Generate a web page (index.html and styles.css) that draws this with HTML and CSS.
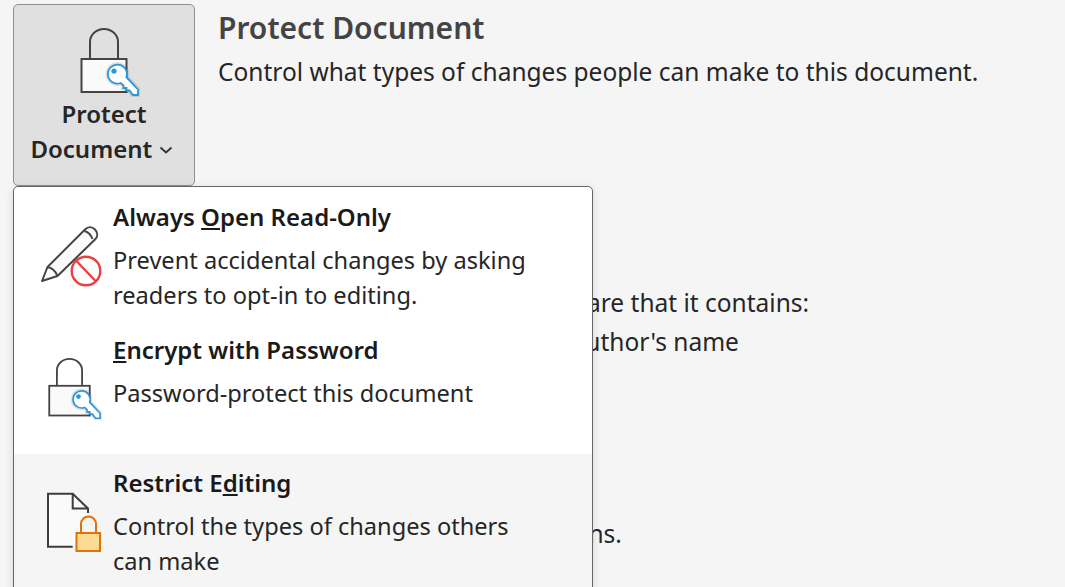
FILE: index.html
```html
<!DOCTYPE html>
<html lang="en">
<head>
    <meta charset="UTF-8">
    <title>Protect Document</title>
    <link rel="stylesheet" href="styles.css">
</head>
<body>
    <svg class="defs" width="0" height="0">
        <symbol id="lock-key" viewBox="78 26 62 70">
            <path d="M90 58V41a14 13 0 0 1 28 0V58" fill="none" stroke="#444" stroke-width="2"/>
            <rect x="81.5" y="58" width="45" height="33" fill="#fafafa" stroke="#444" stroke-width="2"/>
            <path d="M126.4 76.2A9.5 9.5 0 1 0 120.7 82L123.5 84.5V87H126.5V89.5H129.5L133 94H138V88.5Z" fill="none" stroke="currentColor" stroke-opacity="0.12" stroke-width="5"/>
            <path d="M126.4 76.2A9.5 9.5 0 1 0 120.7 82L123.5 84.5V87H126.5V89.5H129.5L133 94H138V88.5Z" fill="#fff" stroke="#2a96d8" stroke-width="1.8"/>
            <circle cx="114" cy="70" r="2.6" fill="#2a96d8"/>
        </symbol>
    </svg>

    <div class="page">
        <button class="protect-btn">
            <svg class="protect-icon"><use href="#lock-key"/></svg>
            <span class="protect-label">Protect</span>
            <span class="protect-label">Document
                <svg class="chevron" viewBox="0 0 14 8"><path d="M1.5 1.5L7 6.5L12.5 1.5" fill="none" stroke="#333" stroke-width="1.8"/></svg>
            </span>
        </button>
        <div class="content">
            <h2>Protect Document</h2>
            <p class="lead">Control what types of changes people can make to this document.</p>
            <p class="inspect">Before publishing this file, be aware that it contains:</p>
            <p class="inspect-item">Document properties and author's name</p>
            <p class="versions">There are no previous versions.</p>
        </div>
    </div>

    <div class="menu">
        <div class="menu-item">
            <svg class="menu-icon" viewBox="40 200 70 100">
                <path d="M42 281L47.500 267L85 229.500C88 226.500 92 226.500 95 229.500C98 232.500 98 236.500 95 239.500L57.500 276Z" fill="#fafafa" stroke="#444" stroke-width="2" stroke-linejoin="round"/>
                <path d="M47.500 267C52 268 56 272 57.500 276M84.500 231C88 232 91 235 92.500 239" fill="none" stroke="#444" stroke-width="2"/>
                <circle cx="86" cy="271" r="14.300" fill="#fff" stroke="#EA3F43" stroke-width="2.400"/>
                <path d="M76.500 261L95.500 281" stroke="#EA3F43" stroke-width="2.400"/>
            </svg>
            <div class="menu-text">
                <div class="menu-title">Always <u>O</u>pen Read-Only</div>
                <div class="menu-desc">Prevent accidental changes by asking<br>readers to opt-in to editing.</div>
            </div>
        </div>
        <div class="menu-item">
            <svg class="menu-lock"><use href="#lock-key"/></svg>
            <div class="menu-text">
                <div class="menu-title"><u>E</u>ncrypt with Password</div>
                <div class="menu-desc">Password-protect this document</div>
            </div>
        </div>
        <div class="menu-item hovered">
            <svg class="menu-icon" viewBox="40 466 70 100">
                <path d="M72.700 546.700H48V493.700H72.700L88 508.500V513" fill="#fafafa" stroke="#3d3d3d" stroke-width="2"/>
                <path d="M72.700 493V508.500H88" fill="none" stroke="#3d3d3d" stroke-width="2"/>
                <path d="M81 533V524a7.500 7.500 0 0 1 15 0V533" fill="none" stroke="#e37109" stroke-width="2"/>
                <rect x="76.500" y="533" width="23.500" height="18" fill="#fbdc92" stroke="#e37109" stroke-width="2"/>
            </svg>
            <div class="menu-text">
                <div class="menu-title">Restrict E<u>d</u>iting</div>
                <div class="menu-desc">Control the types of changes others<br>can make</div>
            </div>
        </div>
    </div>
</body>
</html>
```

FILE: styles.css
```css
html, body {
    margin: 0;
    height: 100%;
    overflow: hidden;
}
body {
    background-color: #F5F5F5;
    font-family: "Noto Sans", "Open Sans", sans-serif;
    color: #262626;
    font-size: 24.5px;
    position: relative;
}
.defs {
    position: absolute;
}
.page {
    display: flex;
    gap: 23px;
    padding: 4px 0 0 13px;
}
.protect-btn {
    width: 182px;
    height: 182px;
    flex: none;
    box-sizing: border-box;
    background: #E0E0E0;
    border: 1px solid #8F8F8F;
    border-radius: 5px;
    padding: 22px 0 0;
    display: flex;
    flex-direction: column;
    align-items: center;
    font-family: inherit;
    font-size: 24px;
    font-weight: 600;
    color: #262626;
}
.protect-icon {
    width: 62px;
    height: 70px;
    margin: 0 0 -1px 10px;
}
.protect-label {
    line-height: 35px;
    white-space: nowrap;
}
.chevron {
    width: 14px;
    height: 8px;
    margin: 0 5px 0 0;
    vertical-align: 4px;
}
.content {
    flex: 1;
}
h2 {
    margin: 4px 0 0;
    font-size: 30px;
    font-weight: 600;
    line-height: 40px;
    color: #444;
}
.lead {
    margin: 7px 0 0;
    line-height: 34px;
}
.inspect {
    margin: 196px 0 0 -6px;
    line-height: 36px;
}
.inspect-item {
    margin: 3px 0 0 51px;
    line-height: 36px;
}
.versions {
    margin: 156px 0 0;
    line-height: 36px;
    padding-left: 44px;
}
.menu {
    position: absolute;
    left: 13px;
    top: 186px;
    width: 580px;
    height: 420px;
    box-sizing: border-box;
    background: #fff;
    border: 1px solid #666;
    border-radius: 5px;
    padding-top: 1px;
    box-shadow: 0 2px 8px rgba(0, 0, 0, 0.12);
}
.menu-item {
    display: flex;
    height: 133px;
}
.menu-item.hovered {
    background: #F5F5F5;
}
.menu-icon {
    width: 70px;
    height: 100px;
    margin: 12px 0 0 26px;
    flex: none;
}
.menu-lock {
    width: 56px;
    height: 63px;
    margin: 36px 8px 0 32px;
    flex: none;
}
.menu-text {
    padding: 12px 0 0 3px;
    font-size: 23.6px;
}
.menu-title {
    font-size: 24px;
    font-weight: 600;
    line-height: 34px;
    color: #1A1A1A;
}
.menu-desc {
    margin-top: 9px;
    line-height: 35px;
    color: #262626;
}
```
